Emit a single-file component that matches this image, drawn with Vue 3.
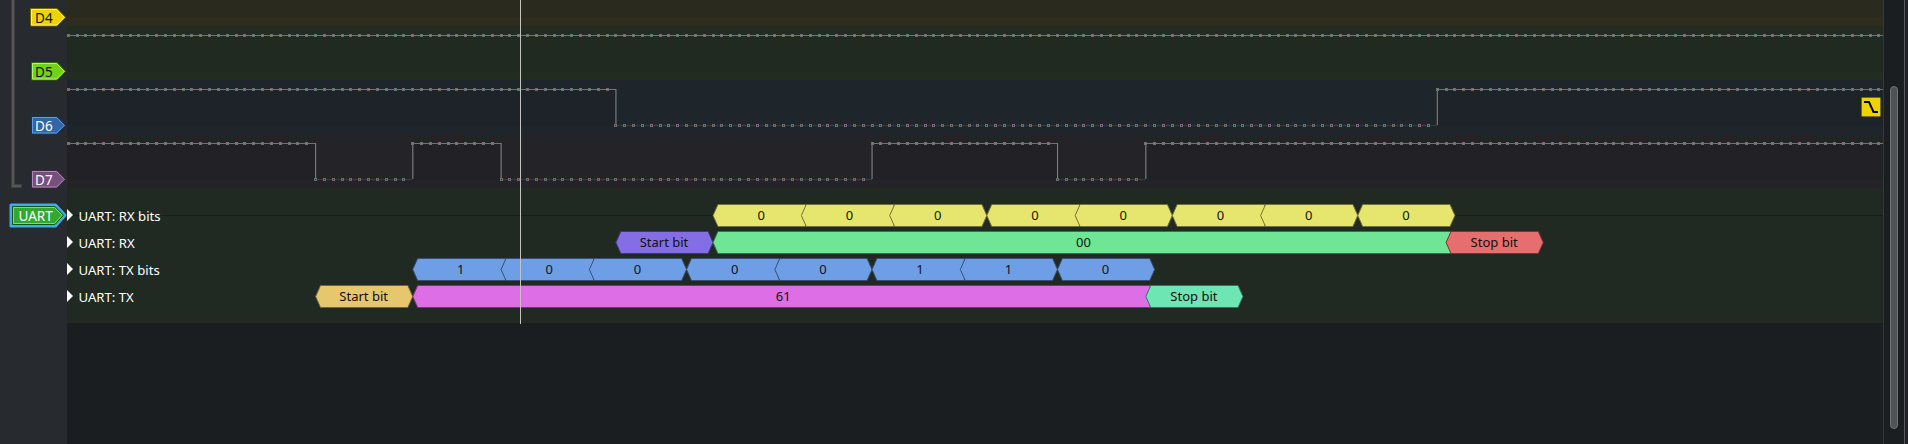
<script setup>
const X0 = 68.3
const STEP = 8.832
const at = (k) => X0 + k * STEP
const RIGHT = 1883

const bands = [
  { y: -28, color: '#2e2b1f', fill: '#2b2a1f' },
  { y: 26, color: '#222c21', fill: '#202a20' },
  { y: 80, color: '#1e252b', fill: '#1e2229' },
  { y: 134, color: '#242328', fill: '#222125' }
]

const signals = [
  { y: 35, segs: [[-1, 206, 1]] },
  { y: 89, segs: [[-1, 62, 1], [62, 155, 0], [155, 206, 1]] },
  { y: 143, segs: [[-1, 28, 1], [28, 39, 0], [39, 49, 1], [49, 91, 0], [91, 112, 1], [112, 122, 0], [122, 206, 1]] }
]
const left = (s) => Math.max(67, Math.round(at(s[0]) - 0.5))
const right = (s) => Math.min(RIGHT, Math.round(at(s[1]) + 0.3))
const sampleLevel = (sig, k) => sig.segs.find((s) => k >= s[0] && k < s[1])[2]
const dots = signals.flatMap((sig) =>
  Array.from({ length: 206 }, (_, k) => {
    const high = sampleLevel(sig, k)
    return {
      x: Math.round(at(k) - 0.5) - 1,
      y: sig.y + (high ? 0 : 36) - 1,
      core: high ? '#7b867b' : '#3a2a2c'
    }
  })
)

const bits = (starts, values, y, fill, stroke) =>
  starts.map((k, i) => ({ a: k, b: k + 11, text: values[i], y, fill, stroke }))

const annotations = [
  ...bits([73, 83, 93, 104, 114, 125, 135, 146], '00000000', 215.5, '#e6e66e', '#737337'),
  { a: 62, b: 73, text: 'Start bit', y: 242.5, fill: '#836ee6', stroke: '#413773' },
  { a: 73, b: 157, text: '00', y: 242.5, fill: '#6ee696', stroke: '#37734b' },
  { a: 156, b: 167, text: 'Stop bit', y: 242.5, fill: '#e66e6e', stroke: '#733737' },
  ...bits([39, 49, 59, 70, 80, 91, 101, 112], '10000110', 269.5, '#6e9fe6', '#374f73'),
  { a: 28, b: 39, text: 'Start bit', y: 296.5, fill: '#e6c76e', stroke: '#736337' },
  { a: 39, b: 123, text: '61', y: 296.5, fill: '#dd6ee6', stroke: '#6e3773' },
  { a: 122, b: 133, text: 'Stop bit', y: 296.5, fill: '#6ee6b4', stroke: '#37735a' }
]
const hex = ({ a, b, y }) => {
  const l = at(a), r = at(b)
  return `${l},${y} ${l + 4.9},${y - 11} ${r - 4.9},${y - 11} ${r},${y} ${r - 4.9},${y + 11} ${l + 4.9},${y + 11}`
}

const rows = [
  { y: 215, text: 'UART: RX bits' },
  { y: 242, text: 'UART: RX' },
  { y: 269, text: 'UART: TX bits' },
  { y: 296, text: 'UART: TX' }
]

const tags = [
  { y: 17, x: 31, text: 'D4', fill: '#edd400', hi: '#fff06a', edge: '#776a00', ink: '#111' },
  { y: 71, x: 32, text: 'D5', fill: '#73d216', hi: '#adff5a', edge: '#39690b', ink: '#111' },
  { y: 125, x: 32, text: 'D6', fill: '#3465a4', hi: '#5a9df5', edge: '#1a3252', ink: '#fff' },
  { y: 179, x: 32, text: 'D7', fill: '#75507b', hi: '#b383bb', edge: '#3a283d', ink: '#fff' }
]
</script>

<template>
  <main class="view">
    <svg class="scene" width="1908" height="444" viewBox="0 0 1908 444">
      <rect width="67" height="444" fill="#272a2f" />
      <g shape-rendering="crispEdges">
        <g v-for="(b, i) in bands" :key="i">
          <rect x="67" :y="b.y" width="1816" height="54" :fill="b.color" />
          <rect v-if="i < 2" x="67" :y="b.y + 9" width="1816" height="36" :fill="b.fill" />
        </g>
        <rect x="67" y="188" width="1816" height="135" fill="#202a23" />
        <rect x="67" y="215" width="1816" height="1" fill="#171d19" />
        <g v-for="(sig, i) in signals" :key="i">
          <template v-for="(s, j) in sig.segs" :key="j">
            <rect v-if="s[2]" :x="left(s)" :y="sig.y + 1" :width="right(s) - left(s)" height="36" :fill="bands[i + 1].fill" />
            <rect :x="left(s)" :y="sig.y + (s[2] ? 0 : 36)" :width="right(s) - left(s)" height="1" :fill="s[2] ? '#00c000' : '#c00000'" />
          </template>
        </g>
      </g>
      <g v-for="(sig, i) in signals" :key="'e' + i">
        <rect v-for="s in sig.segs.slice(1)" :key="s[0]" :x="at(s[0]) - 0.5" :y="sig.y" width="1.1" height="36" fill="#808080" />
      </g>
      <g shape-rendering="crispEdges">
        <template v-for="(d, i) in dots" :key="i">
          <rect :x="d.x" :y="d.y" width="3" height="3" fill="#707070" />
          <rect :x="d.x + 1" :y="d.y + 1" width="1" height="1" :fill="d.core" />
        </template>
      </g>

      <g v-for="(a, i) in annotations" :key="'a' + i">
        <polygon :points="hex(a)" :fill="a.fill" :stroke="a.stroke" />
        <text :x="(at(a.a) + at(a.b)) / 2 - 0.5" :y="a.y + 4.5" text-anchor="middle" fill="#111">{{ a.text }}</text>
      </g>
      <g class="rows" fill="#fff">
        <g v-for="r in rows" :key="r.text">
          <path :d="`M67 ${r.y - 6}L73 ${r.y}L67 ${r.y + 6}z`" />
          <text x="78.5" :y="r.y + 6">{{ r.text }}</text>
        </g>
      </g>
      <rect x="520" y="0" width="1" height="324" fill="#c6c3be" />

      <path d="M13 0V186H22" fill="none" stroke="#3d3f40" stroke-width="4" />
      <path d="M13 0V186H21" fill="none" stroke="#555753" stroke-width="2" />
      <g v-for="t in tags" :key="t.text" class="tag">
        <path :d="`M${t.x - 0.5} ${t.y - 8.5}H57L65.5 ${t.y + 0.3}L57 ${t.y + 9}H${t.x - 0.5}z`" :fill="t.fill" :stroke="t.edge" />
        <path :d="`M${t.x + 0.5} ${t.y - 7.5}H56.6L64.3 ${t.y + 0.3}L56.6 ${t.y + 8}H${t.x + 0.5}z`" fill="none" :stroke="t.hi" />
        <text x="43.9" :y="t.y + 6" text-anchor="middle" :fill="t.ink">{{ t.text }}</text>
      </g>
      <path d="M11 205H55.5L65 215.2L55.5 226H11z" fill="#3daee9" stroke="#3daee9" stroke-width="3" stroke-linejoin="round" />
      <path d="M12.5 206.5H55L63.5 215.2L55 224.5H12.5z" fill="#32a832" stroke="#195419" />
      <path d="M13.5 207.5H54.5L62 215.2L54.5 223.5H13.5z" fill="none" stroke="#5cf05c" />
      <text class="tag" x="35.6" y="221" text-anchor="middle" fill="#fff">UART</text>

      <rect x="1861.5" y="97.5" width="19" height="19" rx="1" fill="#edd400" stroke="#776a00" />
      <path d="M1864 102H1869L1873.5 112H1878" fill="none" stroke="#000" stroke-width="2" />

      <rect x="1883" width="1" height="444" fill="#34373a" />
      <rect x="1904" width="1" height="444" fill="#55585c" />
      <rect x="1905" width="3" height="444" fill="#202228" />
      <rect x="1890.5" y="86.5" width="7" height="342" rx="3.5" fill="#505356" stroke="#717476" />
    </svg>
  </main>
</template>

<style>
body { background: #1b1e20; overflow: hidden; }
</style>

<style scoped>
.view { width: 1908px; height: 444px; overflow: hidden; background: #1b1e20; }
.scene { display: block; font-family: "Noto Sans", sans-serif; font-size: 13px; }
.rows { font-size: 13.15px; }
.tag { font-size: 13.5px; }
</style>
